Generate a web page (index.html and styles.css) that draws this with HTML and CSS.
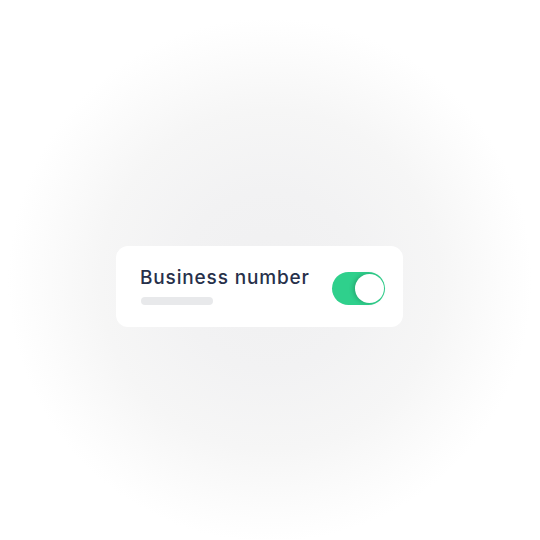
FILE: index.html
```html
<!DOCTYPE html>
<html>
<head>
<meta charset="utf-8">
<link rel="stylesheet" href="styles.css">
</head>
<body>
<div class="stage">
  <div class="card">
    <div class="info">
      <div class="title">Business number</div>
      <div class="bar"></div>
    </div>
    <div class="toggle"><div class="knob"></div></div>
  </div>
</div>
</body>
</html>
```
FILE: styles.css
```css
html, body { margin: 0; padding: 0; }
body {
  width: 540px;
  height: 540px;
  background: radial-gradient(circle at 270px 280px, #f0f0f1 0, #f2f2f3 90px, #f6f6f6 170px, #fcfcfc 230px, #ffffff 262px);
  font-family: Inter, "Open Sans", sans-serif;
}
.stage {
  padding: 246px 0 0 116px;
}
.card {
  width: 287px;
  height: 81px;
  box-sizing: border-box;
  background: #ffffff;
  border-radius: 12px;
  padding: 0 18px 0 24px;
  display: flex;
  align-items: center;
  justify-content: space-between;
}
.info {
  display: flex;
  flex-direction: column;
  margin-top: -1px;
}
.title {
  font-size: 19px;
  font-weight: 500;
  color: #27304a;
  letter-spacing: 0.85px;
  line-height: 22px;
}
.bar {
  margin-top: 8px;
  width: 72px;
  height: 8px;
  border-radius: 4px;
  background: #e8e9eb;
  margin-left: 1px;
}
.toggle {
  width: 53px;
  height: 33px;
  box-sizing: border-box;
  border-radius: 17px;
  background: #2fd08c;
  display: flex;
  justify-content: flex-end;
  align-items: center;
  padding: 0 1px;
  margin-top: 4px;
}
.knob {
  width: 29px;
  height: 29px;
  border-radius: 50%;
  background: #ffffff;
  box-shadow: -2px 0 4px rgba(0,0,0,0.18);
}
```
